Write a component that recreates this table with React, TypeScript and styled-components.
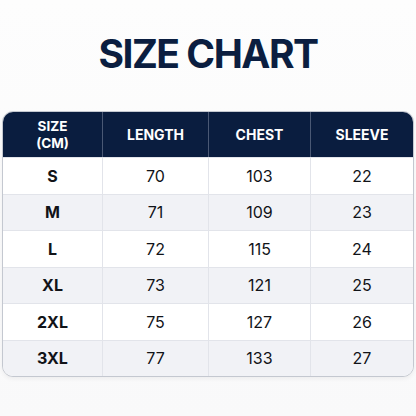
import React from "react";
import styled, { createGlobalStyle } from "styled-components";

const Global = createGlobalStyle`
  html, body { margin: 0; padding: 0; }
  body { background: #fbfbfc; font-family: Inter, "Open Sans", sans-serif; }
`;

const Page = styled.div`
  width: 416px;
  height: 416px;
  box-sizing: border-box;
  padding: 30px 2px 0 2px;
  background: linear-gradient(#fdfdfd, #f9f9fa);
  display: flex;
  flex-direction: column;
  align-items: center;
`;

const Title = styled.h1`
  margin: 0;
  font-family: Inter, sans-serif;
  font-weight: 700;
  font-size: 39px;
  line-height: 48px;
  letter-spacing: -1.5px;
  color: #0b1e40;
`;

const Table = styled.div`
  margin-top: 33px;
  width: 412px;
  box-sizing: border-box;
  border: 1px solid #c4c8d0;
  border-radius: 11px;
  overflow: hidden;
  display: grid;
  grid-template-columns: 99px 106px 102px 1fr;
  box-shadow: 0 2px 4px rgba(0, 0, 0, 0.05);
  background: #fff;
`;

const HeadCell = styled.div<{ $first?: boolean }>`
  height: 45px;
  background: #0a1d3f;
  color: #fff;
  font-weight: 700;
  font-size: 14px;
  line-height: 16px;
  display: flex;
  flex-direction: column;
  align-items: center;
  justify-content: center;
  text-align: center;
  border-left: ${(p) => (p.$first ? "none" : "1px solid #4a5874")};
`;

const HeadLine = styled.span`
  display: block;
  font-size: 13.5px;
  line-height: 16.5px;
`;

const Cell = styled.div<{ $alt: boolean; $first?: boolean }>`
  height: 36.5px;
  box-sizing: border-box;
  background: ${(p) => (p.$alt ? "#f1f2f6" : "#ffffff")};
  border-top: 1px solid #e2e4ea;
  border-left: ${(p) => (p.$first ? "none" : "1px solid #e2e4ea")};
  display: flex;
  align-items: center;
  justify-content: center;
  font-size: 16px;
  font-weight: ${(p) => (p.$first ? 700 : 400)};
  color: #111318;
`;

const rows = [
  ["S", 70, 103, 22],
  ["M", 71, 109, 23],
  ["L", 72, 115, 24],
  ["XL", 73, 121, 25],
  ["2XL", 75, 127, 26],
  ["3XL", 77, 133, 27],
];

export default function App() {
  return (
    <>
      <Global />
      <Page>
        <Title>SIZE CHART</Title>
        <Table>
          <HeadCell $first>
            <HeadLine>SIZE</HeadLine>
            <HeadLine>(CM)</HeadLine>
          </HeadCell>
          <HeadCell>LENGTH</HeadCell>
          <HeadCell>CHEST</HeadCell>
          <HeadCell>SLEEVE</HeadCell>
          {rows.map((r, i) =>
            r.map((v, j) => (
              <Cell key={`${i}-${j}`} $alt={i % 2 === 1} $first={j === 0}>
                {v}
              </Cell>
            ))
          )}
        </Table>
      </Page>
    </>
  );
}
